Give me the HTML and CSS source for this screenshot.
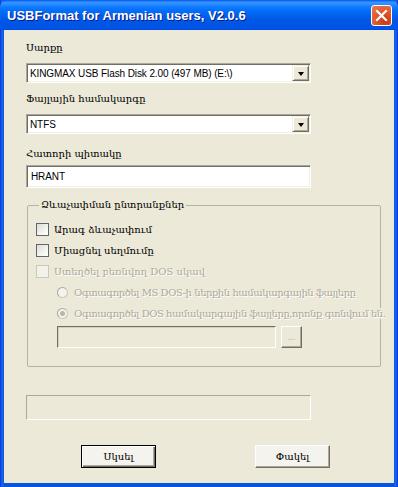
FILE: index.html
```html
<!DOCTYPE html>
<html lang="hy">

<head>
    <meta charset="UTF-8">
    <title>USBFormat for Armenian users, V2.0.6</title>
    <link rel="stylesheet" href="styles.css">
</head>

<body>
    <div class="window">
        <!-- Title bar -->
        <div class="titlebar">
            <span class="title">USBFormat for Armenian users, V2.0.6</span>
            <span class="close-box">
                <svg width="21" height="21" viewBox="0 0 21 21">
                    <path d="M6 6 L15 15 M15 6 L6 15" stroke="#fff" stroke-width="2.2" stroke-linecap="square"/>
                </svg>
            </span>
        </div>

        <div class="client">
            <div class="label first">Սարքը</div>
            <div class="combo">
                <span class="combo-text">KINGMAX USB Flash Disk 2.00 (497 MB) (E:\)</span>
                <span class="combo-arrow"><span class="tri"></span></span>
            </div>

            <div class="label">Ֆայլային համակարգը</div>
            <div class="combo">
                <span class="combo-text">NTFS</span>
                <span class="combo-arrow"><span class="tri"></span></span>
            </div>

            <div class="label third">Հատորի պիտակը</div>
            <div class="edit">HRANT</div>

            <!-- Format options -->
            <fieldset class="group">
                <legend>Ձևաչափման ընտրանքներ</legend>
                <div class="row first-row"><span class="checkbox"></span><span class="hy">Արագ ձևաչափում</span></div>
                <div class="row"><span class="checkbox"></span><span class="hy">Միացնել սեղմումը</span></div>
                <div class="row disabled"><span class="checkbox off"></span><span class="hy">Ստեղծել բեռնվող DOS սկավ</span></div>
                <div class="row radio-row disabled"><span class="radio"></span><span class="hy">Օգտագործել MS DOS-ի ներքին համակարգային ֆայլերը</span></div>
                <div class="row radio-row disabled"><span class="radio checked"></span><span class="hy over">Օգտագործել DOS համակարգային ֆայլերը,որոնք գտնվում են.</span></div>
                <div class="path-row">
                    <span class="path-field"></span>
                    <span class="dots-btn">...</span>
                </div>
            </fieldset>

            <div class="progress"></div>

            <div class="buttons">
                <span class="btn default">Սկսել</span>
                <span class="btn">Փակել</span>
            </div>
        </div>
    </div>
</body>

</html>
```

FILE: styles.css
```css
body {
    margin: 0;
    background-color: #ece9d8;
    font-family: "Liberation Sans", Arial, sans-serif;
    font-size: 11px;
}

.window {
    width: 398px;
    height: 487px;
    box-sizing: border-box;
    background: linear-gradient(to right, #0831d9 0px, #166aee 2px, #0855dd 4px, #0855dd 394px, #166aee 396px, #0831d9 398px);
    overflow: hidden;
}

.titlebar {
    height: 30px;
    display: flex;
    align-items: center;
    justify-content: space-between;
    padding: 0 6px 0 7px;
    background: linear-gradient(to bottom, #0058ee 0%, #3a93ff 8%, #288eff 14%, #127dff 22%, #036ffc 34%, #0262ee 50%, #0057e5 70%, #0054e3 88%, #0055eb 94%, #0048dc 100%);
    border-radius: 7px 7px 0 0;
}

.title {
    color: #fff;
    font-family: "Liberation Sans", Arial, sans-serif;
    font-weight: bold;
    font-size: 13px;
    text-shadow: 1px 1px 0 #0a1883;
    margin-top: 1px;
}

.close-box {
    width: 21px;
    height: 21px;
    box-sizing: border-box;
    border: 1px solid #fff;
    border-radius: 3px;
    background: radial-gradient(circle at 70% 80%, #c4380c 0%, #e0552a 45%, #ea7a55 100%);
    display: flex;
}

.close-box svg {
    margin: -1px;
}

.client {
    margin: 0 4px;
    height: 453px;
    box-sizing: border-box;
    background-color: #ece9d8;
    padding-left: 22px;
    padding-top: 1px;
}

.label,
.hy,
legend,
.btn {
    font-family: "DejaVu Serif", serif;
    font-size: 10px;
}

.label {
    line-height: 14px;
    margin-top: 9px;
    margin-bottom: 8px;
    color: #000;
}

.label.first {
    margin-top: 10px;
}

.label.third {
    margin-top: 13px;
    margin-bottom: 4px;
}

.combo {
    width: 285px;
    height: 20px;
    box-sizing: border-box;
    background: #fff;
    border-top: 1px solid #aca899;
    border-left: 1px solid #aca899;
    border-right: 1px solid #fff;
    border-bottom: 1px solid #fff;
    box-shadow: inset 1px 1px 0 #716f64, inset -1px -1px 0 #f1efe2;
    display: flex;
    align-items: center;
    justify-content: space-between;
    padding: 0 1px 0 3px;
}

.combo-text,
.edit {
    font-size: 10px;
    letter-spacing: -0.1px;
    color: #000;
}

.combo-arrow {
    width: 17px;
    height: 16px;
    box-sizing: border-box;
    background: #ece9d8;
    border-top: 1px solid #f1efe2;
    border-left: 1px solid #f1efe2;
    border-right: 1px solid #716f64;
    border-bottom: 1px solid #716f64;
    box-shadow: inset 1px 1px 0 #fff, inset -1px -1px 0 #aca899;
    display: flex;
    align-items: center;
    justify-content: center;
}

.tri {
    width: 0;
    height: 0;
    border-left: 3.5px solid transparent;
    border-right: 3.5px solid transparent;
    border-top: 4px solid #000;
    margin-top: 1px;
}

.edit {
    width: 285px;
    height: 23px;
    box-sizing: border-box;
    background: #fff;
    border-top: 1px solid #aca899;
    border-left: 1px solid #aca899;
    border-right: 1px solid #fff;
    border-bottom: 1px solid #fff;
    box-shadow: inset 1px 1px 0 #716f64, inset -1px -1px 0 #f1efe2;
    padding: 0 4px;
    line-height: 21px;
}

.group {
    width: 354px;
    box-sizing: border-box;
    margin: 10px 0 0 1px;
    padding: 0 0 18px 8px;
    border: 1px solid #b5b3a4;
    border-radius: 2px;
    min-width: 0;
}

.group legend {
    line-height: 14px;
    padding: 0 2px;
    margin-left: 3px;
    color: #000;
}

.row {
    height: 21px;
    display: flex;
    align-items: center;
    gap: 5px;
    white-space: nowrap;
}

.row.first-row {
    margin-top: 7px;
}

.row.disabled {
    color: #aca899;
}

.row.disabled .hy {
    text-shadow: 1px 1px 0 #fff;
}

.radio-row {
    padding-left: 21px;
}

.radio-row .hy {
    letter-spacing: -0.45px;
}

.hy.over {
    background: #ece9d8;
    padding-right: 2px;
}

.checkbox {
    width: 13px;
    height: 13px;
    box-sizing: border-box;
    border: 1px solid #5e6670;
    background: linear-gradient(135deg, #dcdcd5 0%, #f4f4f0 60%, #fff 100%);
    flex-shrink: 0;
}

.checkbox.off {
    border-color: #cac8bb;
    background: #f2f1ea;
}

.radio {
    width: 11px;
    height: 11px;
    box-sizing: border-box;
    border-radius: 50%;
    border: 1px solid #cac8bb;
    border-left-color: #aca899;
    border-top-color: #aca899;
    background: #f4f3ee;
    margin-right: 1px;
    position: relative;
    flex-shrink: 0;
}

.radio.checked::after {
    content: "";
    position: absolute;
    left: 2px;
    top: 2px;
    width: 5px;
    height: 5px;
    border-radius: 50%;
    background: #b8b6a8;
}

.path-row {
    display: flex;
    gap: 5px;
    margin-top: 2px;
    padding-left: 21px;
}

.path-field {
    width: 219px;
    height: 22px;
    box-sizing: border-box;
    border-top: 1px solid #716f64;
    border-left: 1px solid #716f64;
    border-right: 1px solid #fff;
    border-bottom: 1px solid #fff;
    box-shadow: inset 1px 1px 0 #d4d0c0;
}

.dots-btn {
    width: 21px;
    height: 22px;
    box-sizing: border-box;
    border-top: 1px solid #fff;
    border-left: 1px solid #fff;
    border-right: 1px solid #716f64;
    border-bottom: 1px solid #716f64;
    box-shadow: inset -1px -1px 0 #aca899;
    color: #aca899;
    text-align: center;
    font-size: 9px;
    line-height: 20px;
}

.progress {
    width: 285px;
    height: 25px;
    box-sizing: border-box;
    margin-top: 28px;
    border-top: 1px solid #aca899;
    border-left: 1px solid #aca899;
    border-right: 1px solid #fff;
    border-bottom: 1px solid #fff;
}

.buttons {
    display: flex;
    gap: 99px;
    margin-top: 25px;
    padding-left: 55px;
}

.btn {
    width: 75px;
    height: 23px;
    box-sizing: border-box;
    background: #f4f3ee;
    border-top: 1px solid #fff;
    border-left: 1px solid #fff;
    border-right: 1px solid #716f64;
    border-bottom: 1px solid #716f64;
    box-shadow: inset -1px -1px 0 #aca899;
    display: flex;
    align-items: center;
    justify-content: center;
    color: #000;
}

.btn.default {
    border: 1px solid #000;
    box-shadow: inset 1px 1px 0 #fff, inset -1px -1px 0 #716f64, inset -2px -2px 0 #aca899;
}
```
